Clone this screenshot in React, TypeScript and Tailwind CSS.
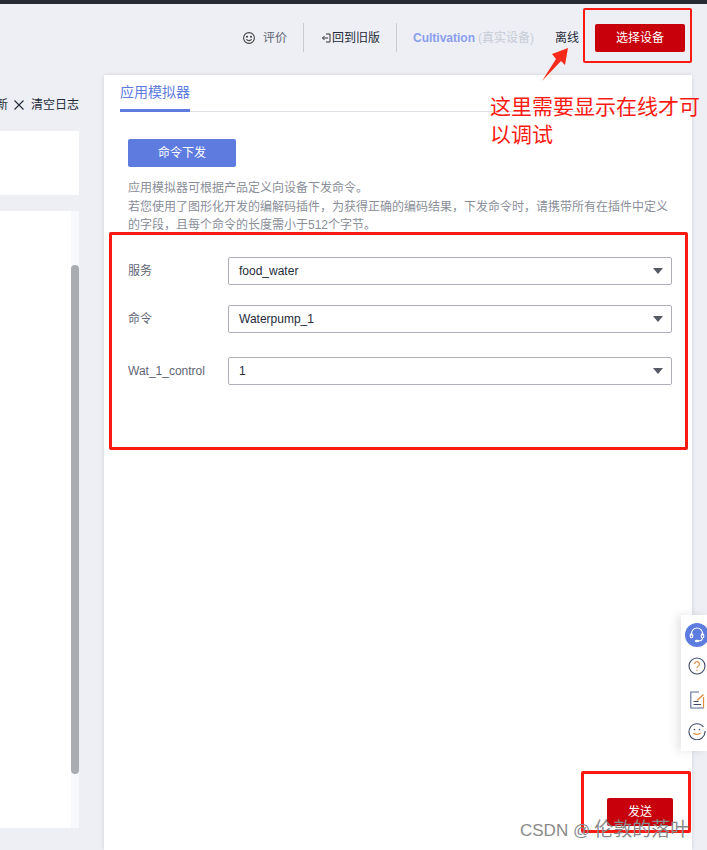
import React from "react";

const font = { fontFamily: '"Liberation Sans","Noto Sans CJK SC",sans-serif' };

function Caret() {
  return <span className="h-0 w-0 border-x-[5px] border-t-[6px] border-x-transparent border-t-[#555a66]" />;
}

function Row({ label, value, cls }: { label: string; value: string; cls: string }) {
  return (
    <div className={`flex items-center ${cls}`}>
      <div className="w-[100px] text-[12px] text-[#5f6573]">{label}</div>
      <div className="flex h-[28px] w-[444px] items-center justify-between rounded-[2px] border border-[#adb0b8] pl-[10px] pr-[8px] text-[12px] text-[#252b3a]">
        <span>{value}</span>
        <Caret />
      </div>
    </div>
  );
}

export default function App() {
  return (
    <div className="relative flex h-[850px] w-[707px] flex-col overflow-hidden bg-[#eeeff5]" style={font}>
      <div className="h-[4px] shrink-0 bg-[#282b33]" />
      <header className="flex h-[71px] shrink-0 items-center justify-end pb-[4px] pr-[22px] text-[12px]">
        <svg width="14" height="14" viewBox="0 0 14 14" fill="none" stroke="#444" strokeWidth="1.1" className="mr-[7px]">
          <circle cx="7" cy="7" r="5.4" />
          <circle cx="5" cy="5.8" r=".5" fill="#444" />
          <circle cx="9" cy="5.8" r=".5" fill="#444" />
          <path d="M4.4 8.3c1.2 1.8 4 1.8 5.2 0" />
        </svg>
        <span className="text-[#5f6573]">评价</span>
        <span className="ml-[16px] h-[29px] w-px bg-[#c9cbd1]" />
        <span className="ml-[17px] flex items-center text-[#252b3a]">
          <svg width="11" height="10" viewBox="0 0 11 10" fill="none" stroke="#333" strokeWidth="1">
            <path d="M7 5H1.5M3.5 3l-2 2 2 2" />
            <path d="M5 1h4v8H5" />
          </svg>
          回到旧版
        </span>
        <span className="ml-[16px] h-[29px] w-px bg-[#c9cbd1]" />
        <span className="ml-[16px] font-bold text-[#8a9ef0]">Cultivation</span>
        <span className="ml-[3px] font-medium text-[#ccd0da]">(真实设备)</span>
        <span className="ml-[21px] text-[#252b3a]">离线</span>
        <button className="ml-[16px] h-[28px] w-[90px] rounded-[2px] bg-[#c7000b] text-[12px] text-white">选择设备</button>
      </header>
      <div className="flex min-h-0 flex-1">
        <aside className="flex w-[104px] shrink-0 flex-col">
          <div className="flex h-[56px] w-[79px] items-center justify-end overflow-hidden pt-[3px] text-[12px] whitespace-nowrap text-[#252b3a]">
            <span className="shrink-0">新</span>
            <svg width="10" height="10" viewBox="0 0 10 10" stroke="#252b3a" strokeWidth="1.1" className="mr-[7px] ml-[6px] shrink-0">
              <path d="M.5.5l9 9M9.5.5l-9 9" />
            </svg>
            <span className="shrink-0">清空日志</span>
          </div>
          <div className="h-[64px] w-[79px] bg-white" />
          <div className="mt-[16px] flex h-[617px] w-[79px] justify-end bg-white">
            <div className="h-full w-[8px] bg-[#f8f9fd]">
              <div className="mt-[54px] h-[509px] w-[8px] rounded-b-[4px] rounded-t-[4px] bg-[#a9adb2]" />
            </div>
          </div>
        </aside>
        <main className="flex w-[588px] shrink-0 flex-col bg-white pr-[19px] pl-[16px] shadow-[0_0_4px_rgba(0,0,0,0.12)]">
          <div className="h-[37px] border-b border-[#dfe1e6]">
            <div className="h-[37px] w-[70px] border-b-[3px] border-[#5e7ce0] pt-[8px] text-[14px] leading-[18px] text-[#5e7ce0]">
              应用模拟器
            </div>
          </div>
          <div className="pl-[8px]">
            <button className="mt-[27px] h-[28px] w-[108px] rounded-[2px] bg-[#5e7ce0] text-[12px] text-white">命令下发</button>
            <p className="mt-[12px] w-[545px] text-[12px] leading-[18.5px] text-[#8a8e99]">
              应用模拟器可根据产品定义向设备下发命令。
              <br />
              若您使用了图形化开发的编解码插件，为获得正确的编码结果，下发命令时，请携带所有在插件中定义的字段，且每个命令的长度需小于512个字节。
            </p>
            <Row cls="mt-[22px]" label="服务" value="food_water" />
            <Row cls="mt-[20px]" label="命令" value="Waterpump_1" />
            <Row cls="mt-[24px]" label="Wat_1_control" value="1" />
          </div>
          <div className="mt-auto mb-[24px] flex justify-end">
            <button className="h-[28px] w-[66px] rounded-[2px] bg-[#c7000b] text-[12px] text-white">发送</button>
          </div>
        </main>
      </div>

      <div className="absolute top-[615px] left-[681px] flex h-[136px] w-[26px] flex-col items-start bg-white pt-[8px] pl-[4px] shadow-[-4px_0_10px_rgba(0,0,0,0.1)]">
        <div className="flex h-[24px] w-[24px] shrink-0 items-center justify-center rounded-full bg-[#5e7ce0]">
          <svg width="18" height="18" viewBox="0 0 18 18" fill="none" stroke="#fff" strokeWidth="1.1">
            <path d="M3.5 9.5V7.5a5.5 5.5 0 0 1 11 0v2" />
            <rect x="2.3" y="7.8" width="2.4" height="4" rx="1" />
            <rect x="13.3" y="7.8" width="2.4" height="4" rx="1" />
            <path d="M14.5 12c0 2-2 3-4.5 3" />
            <ellipse cx="9" cy="15" rx="1.6" ry=".8" fill="#fff" />
          </svg>
        </div>
        <svg width="18" height="18" viewBox="0 0 18 18" fill="none" className="mt-[10px] ml-[3px] shrink-0">
          <circle cx="9" cy="9" r="8" stroke="#3f4a6b" strokeWidth="1.1" />
          <path d="M6.6 7a2.4 2.4 0 1 1 3.6 2.1c-.8.5-1.2.9-1.2 2" stroke="#e08a3c" strokeWidth="1.1" />
          <circle cx="9" cy="13.3" r=".7" fill="#e08a3c" />
        </svg>
        <svg width="15" height="18" viewBox="0 0 15 18" fill="none" className="mt-[16px] ml-[5px] shrink-0">
          <path d="M9 1H.8v16h13" stroke="#5b6b94" strokeWidth="1.1" />
          <path d="M13.6 17V6" stroke="#e08a3c" strokeWidth="1.1" />
          <path d="M7 9.5l6.5-6" stroke="#e08a3c" strokeWidth="1.3" />
          <path d="M3.5 10.5h5M3.5 13.5h7.5" stroke="#3f4a6b" strokeWidth="1.1" />
        </svg>
        <svg width="18" height="18" viewBox="0 0 18 18" fill="none" className="mt-[13px] ml-[3px] shrink-0">
          <path d="M15.5 5A8 8 0 1 0 17 9" stroke="#3f4a6b" strokeWidth="1.1" />
          <circle cx="6.5" cy="7.5" r=".8" fill="#3f4a6b" />
          <circle cx="11.5" cy="7.5" r=".8" fill="#3f4a6b" />
          <path d="M5.5 11c2 2 5 2 7 0" stroke="#e08a3c" strokeWidth="1.1" />
        </svg>
      </div>

      <div className="absolute top-[8px] left-[583px] h-[55px] w-[109px] rounded-[2px] border-[2px] border-[#fb1a12]" />
      <div className="absolute top-[232px] left-[109px] h-[218px] w-[579px] rounded-[2px] border-[3px] border-[#fb1a12]" />
      <div className="absolute top-[771px] left-[581px] h-[62px] w-[110px] rounded-[2px] border-[3px] border-[#fb1a12]" />
      <svg width="30" height="36" viewBox="0 0 30 36" className="absolute top-[46px] left-[541px]">
        <path d="M1 35 L15 13 L11 8 L27 2 L24 19 L20 15 Z" fill="#f82a1c" />
      </svg>
      <div className="absolute top-[93px] left-[490px] w-[217px] text-[21px] leading-[28px] whitespace-nowrap text-[#fb1a12]">
        这里需要显示在线才可
        <br />
        以调试
      </div>
      <div className="absolute top-[819px] left-[520px] text-[17px] leading-[22px] whitespace-nowrap text-[#8a8a8a]">
        CSDN @<span className="ml-[4px] text-[19px]">伦敦的落叶</span>
      </div>
    </div>
  );
}
